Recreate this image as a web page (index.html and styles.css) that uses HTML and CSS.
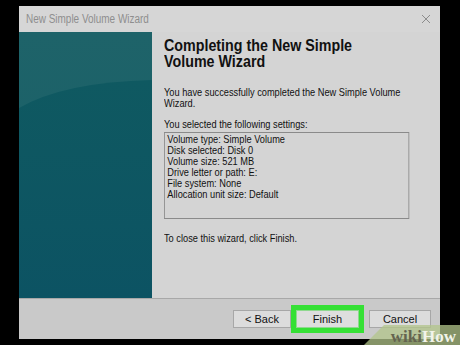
FILE: index.html
```html
<!DOCTYPE html>
<html lang="en">
<head>
    <meta charset="UTF-8">
    <title>New Simple Volume Wizard</title>
    <link rel="stylesheet" href="styles.css">
</head>
<body>
    <div class="dialog">
        <div class="titlebar">
            <span class="title">New Simple Volume Wizard</span>
            <svg class="close" width="10" height="10" viewBox="0 0 10 10">
                <path d="M1 1 L9 9 M9 1 L1 9" stroke="#8c8c8c" stroke-width="1" fill="none"/>
            </svg>
        </div>
        <div class="main">
            <div class="side">
                <svg width="133" height="266" viewBox="0 0 133 266">
                    <defs>
                        <linearGradient id="top" x1="0" y1="0" x2="0" y2="1">
                            <stop offset="0" stop-color="#1e6369"/>
                            <stop offset="1" stop-color="#185f68"/>
                        </linearGradient>
                        <linearGradient id="low" x1="0" y1="0" x2="0" y2="1">
                            <stop offset="0" stop-color="#0f5961"/>
                            <stop offset="1" stop-color="#0c5363"/>
                        </linearGradient>
                    </defs>
                    <rect width="133" height="266" fill="url(#top)"/>
                    <path d="M0 76 Q45 50 133 48 L133 266 L0 266 Z" fill="url(#low)"/>
                </svg>
            </div>
            <div class="content">
                <div class="squeeze">
                    <h1>Completing the New Simple<br>Volume Wizard</h1>
                    <p class="intro">You have successfully completed the New Simple Volume<br>Wizard.</p>
                    <p class="label">You selected the following settings:</p>
                    <div class="settings">
                        <div>Volume type: Simple Volume</div>
                        <div>Disk selected: Disk 0</div>
                        <div>Volume size: 521 MB</div>
                        <div>Drive letter or path: E:</div>
                        <div>File system: None</div>
                        <div>Allocation unit size: Default</div>
                    </div>
                    <p class="close-note">To close this wizard, click Finish.</p>
                </div>
            </div>
        </div>
        <div class="buttons">
            <button>&lt; Back</button>
            <span class="highlight"><button>Finish</button></span>
            <button class="cancel">Cancel</button>
        </div>
    </div>
    <div class="watermark"><span class="wiki">wiki</span><span class="how">How</span></div>
</body>
</html>
```

FILE: styles.css
```css
body {
    margin: 0;
    background-color: #000;
    width: 460px;
    height: 345px;
    overflow: hidden;
    position: relative;
    font-family: "Liberation Sans", Arial, sans-serif;
    color: #111;
}
.dialog {
    margin: 6px 0 0 19px;
    width: 421px;
    height: 333px;
    background-color: #d3d3d3;
    display: flex;
    flex-direction: column;
}
.titlebar {
    height: 26px;
    display: flex;
    align-items: center;
    justify-content: space-between;
    padding: 0 9px 0 7px;
    background-color: #d6d6d6;
}
.title {
    display: inline-block;
    font-size: 12px;
    color: #8e8e8e;
    transform: scaleX(0.83);
    transform-origin: 0 50%;
}
.main {
    height: 266px;
    display: flex;
    border-bottom: 1px solid #a8a8a8;
}
.side {
    width: 133px;
    height: 266px;
}
.side svg {
    display: block;
}
.content {
    flex: 1;
    padding: 5px 0 0 12px;
    background-color: #d4d4d4;
    overflow: hidden;
}
/* screenshot is squeezed sideways, so is the text */
.squeeze {
    width: 330px;
    transform: scaleX(0.84);
    transform-origin: 0 0;
}
h1 {
    margin: 0;
    font-size: 17px;
    line-height: 16px;
    font-weight: bold;
    padding-top: 1px;
}
p {
    margin: 0;
    font-size: 11px;
    line-height: 10.5px;
}
.intro {
    margin-top: 17px;
}
.label {
    margin-top: 11px;
}
.settings {
    margin-top: 2px;
    width: 285px;
    height: 84px;
    border: 1px solid #8a8a8a;
    padding: 1px 2px 0 3px;
    font-size: 11px;
    line-height: 11px;
}
.close-note {
    margin-top: 14px;
}
.buttons {
    flex: 1;
    display: flex;
    align-items: center;
    padding: 0 9px 0 214px;
    background-color: #c9c9c9;
}
button {
    width: 58px;
    height: 18px;
    padding: 0;
    border: 1px solid #a7a7a7;
    background-color: #dcdcdc;
    font-family: "Liberation Sans", Arial, sans-serif;
    font-size: 11px;
    color: #111;
}
.highlight {
    display: flex;
    padding: 5px;
    margin: 0 5px 0 0;
    background-color: #35e035;
}
.highlight button {
    width: 63px;
    border-color: #8fd88f;
    background-color: #dedede;
}
.cancel {
    width: 62px;
}
.watermark {
    position: absolute;
    right: 0;
    bottom: 0;
    width: 92px;
    height: 20px;
    background: rgba(178, 196, 138, 0.75);
    clip-path: polygon(20px 0, 100% 0, 100% 100%, 0 100%);
    font-family: "Liberation Serif", serif;
    font-weight: bold;
    font-size: 17px;
    line-height: 23px;
    text-align: right;
    padding-right: 4px;
}
.wiki {
    color: #64644f;
}
.how {
    color: #f2f4ea;
}
```
